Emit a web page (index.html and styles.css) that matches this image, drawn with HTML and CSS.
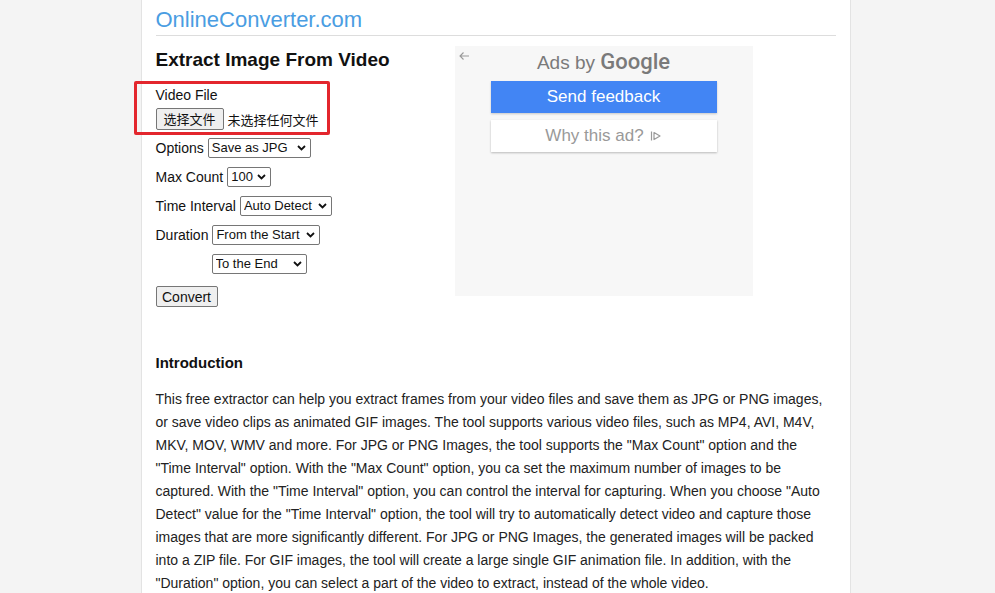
FILE: index.html
```html
<!DOCTYPE html>
<html lang="en">
<head>
    <meta charset="UTF-8">
    <meta name="viewport" content="width=device-width, initial-scale=1.0">
    <title>Extract Image From Video - OnlineConverter.com</title>
    <link rel="stylesheet" href="styles.css">
</head>
<body>
    <div class="page">
        <div class="site-header">
            <a class="site-title" href="#">OnlineConverter.com</a>
        </div>

        <div class="tool">
            <div class="tool-form">
                <h1>Extract Image From Video</h1>
                <div class="file-field">
                    <div class="field-label">Video File</div>
                    <div class="file-input">
                        <span class="file-btn">选择文件</span>
                        <span class="file-name">未选择任何文件</span>
                    </div>
                    <div class="mark"></div>
                </div>
                <div class="row">
                    Options
                    <select class="sel-options">
                        <option>Save as JPG</option>
                        <option>Save as PNG</option>
                        <option>Save as GIF</option>
                    </select>
                </div>
                <div class="row">
                    Max Count
                    <select class="sel-count">
                        <option>100</option>
                        <option>50</option>
                        <option>20</option>
                    </select>
                </div>
                <div class="row">
                    Time Interval
                    <select class="sel-interval">
                        <option>Auto Detect</option>
                        <option>1 second</option>
                        <option>5 seconds</option>
                    </select>
                </div>
                <div class="row">
                    Duration
                    <select class="sel-start">
                        <option>From the Start</option>
                    </select>
                </div>
                <div class="row indent">
                    <select class="sel-end">
                        <option>To the End</option>
                    </select>
                </div>
                <button class="convert-btn">Convert</button>
            </div>

            <div class="ad-box">
                <svg class="ad-back" width="12" height="10" viewBox="0 0 12 10">
                    <path d="M11 5H2M5.5 1.5L2 5l3.5 3.5" fill="none" stroke="#999" stroke-width="1.1"/>
                </svg>
                <div class="ad-title">Ads by <span class="google">Google</span></div>
                <div class="ad-feedback">Send feedback</div>
                <div class="ad-why">
                    Why this ad?
                    <svg width="12" height="12" viewBox="0 0 12 12">
                        <path d="M1.5 1.5v9" stroke="#999" stroke-width="1.2"/>
                        <path d="M4 2.5l6 3.5-6 3.5z" fill="none" stroke="#999" stroke-width="1.2" stroke-linejoin="round"/>
                    </svg>
                </div>
            </div>
        </div>

        <h2>Introduction</h2>
        <p>This free extractor can help you extract frames from your video files and save them as JPG or PNG images, or save video clips as animated GIF images. The tool supports various video files, such as MP4, AVI, M4V, MKV, MOV, WMV and more. For JPG or PNG Images, the tool supports the "Max Count" option and the "Time Interval" option. With the "Max Count" option, you ca set the maximum number of images to be captured. With the "Time Interval" option, you can control the interval for capturing. When you choose "Auto Detect" value for the "Time Interval" option, the tool will try to automatically detect video and capture those images that are more significantly different. For JPG or PNG Images, the generated images will be packed into a ZIP file. For GIF images, the tool will create a large single GIF animation file. In addition, with the "Duration" option, you can select a part of the video to extract, instead of the whole video.</p>
    </div>
</body>
</html>
```

FILE: styles.css
```css
body {
    margin: 0;
    background: #f4f4f4;
    font-family: Arial, 'Liberation Sans', 'Noto Sans CJK SC', sans-serif;
    font-size: 14px;
    color: #222;
}

.page {
    width: 680px;
    margin: 0 0 0 calc(50% - 357px);
    padding: 0 14px 40px;
    background: #fff;
    border-left: 1px solid #e3e3e3;
    border-right: 1px solid #e3e3e3;
    min-height: 100vh;
}

.site-header {
    padding: 7px 0 2px;
    border-bottom: 1px solid #ddd;
}

.site-title {
    font-size: 22px;
    line-height: 26px;
    color: #4a9de2;
    text-decoration: none;
}

.tool {
    display: flex;
    margin-top: 10px;
}

.tool-form {
    width: 299px;
    position: relative;
}

h1 {
    margin: 2px 0 0;
    font-size: 19px;
    line-height: 24px;
    color: #111;
}

.file-field {
    position: relative;
    margin-top: 14px;
}

.field-label {
    line-height: 18px;
    color: #111;
}

.file-input {
    display: flex;
    align-items: center;
    margin-top: 4px;
    font-family: 'Noto Sans CJK SC', sans-serif;
    font-size: 13px;
    color: #111;
}

.file-btn {
    height: 20px;
    line-height: 20px;
    padding: 0 7px;
    border: 1px solid #767676;
    border-radius: 2px;
    background: #efefef;
}

.file-name {
    margin-left: 4px;
}

/* red annotation box drawn over the file field */
.mark {
    position: absolute;
    left: -22px;
    top: -5px;
    width: 190px;
    height: 48px;
    border: 3px solid #e3262d;
    border-radius: 2px;
}

.row {
    display: flex;
    align-items: center;
    height: 29px;
    margin-top: 3px;
    color: #111;
}

.row + .row {
    margin-top: 0;
}

.row select {
    margin-left: 4px;
}

.row.indent {
    padding-left: 52px;
}

select {
    -webkit-appearance: none;
    appearance: none;
    height: 20px;
    font-family: Arial, 'Liberation Sans', sans-serif;
    font-size: 13px;
    color: #111;
    border: 1px solid #767676;
    border-radius: 2px;
    padding: 0 0 0 3px;
    background: #fff url("data:image/svg+xml,%3Csvg xmlns='http://www.w3.org/2000/svg' width='9' height='6' viewBox='0 0 9 6'%3E%3Cpath d='M1 1l3.5 3.5L8 1' fill='none' stroke='%23111' stroke-width='1.8'/%3E%3C/svg%3E") no-repeat right 4px center;
}

.sel-options { width: 103px; }
.sel-count { width: 44px; }
.sel-interval { width: 92px; }
.sel-start { width: 108px; }
.sel-end { width: 95px; }

.convert-btn {
    margin-top: 8px;
    height: 21px;
    width: 62px;
    padding: 0;
    font-family: Arial, 'Liberation Sans', sans-serif;
    font-size: 14px;
    color: #111;
    background: #efefef;
    border: 1px solid #767676;
    border-radius: 2px;
}

.ad-box {
    position: relative;
    width: 298px;
    height: 250px;
    background: #f7f7f7;
    display: flex;
    flex-direction: column;
    align-items: center;
}

.ad-back {
    position: absolute;
    left: 3px;
    top: 5px;
}

.ad-title {
    margin-top: 4px;
    font-size: 19px;
    line-height: 24px;
    color: #7a7a7a;
}

.google {
    font-family: Roboto, Arial, sans-serif;
    font-weight: 500;
    font-size: 22px;
    color: #7a7a7a;
}

.ad-feedback {
    margin-top: 6px;
    width: 226px;
    height: 32px;
    line-height: 32px;
    text-align: center;
    background: #4285f4;
    color: #fff;
    font-size: 17px;
    box-shadow: 0 1px 2px rgba(0, 0, 0, 0.2);
}

.ad-why {
    margin-top: 7px;
    width: 226px;
    height: 32px;
    display: flex;
    align-items: center;
    justify-content: center;
    gap: 6px;
    background: #fff;
    color: #999;
    font-size: 17px;
    box-shadow: 0 1px 2px rgba(0, 0, 0, 0.25);
}

h2 {
    margin: 47px 0 0;
    font-size: 15px;
    line-height: 18px;
    color: #111;
}

p {
    margin: 16px 0 0;
    line-height: 23px;
    color: #222;
}
```
